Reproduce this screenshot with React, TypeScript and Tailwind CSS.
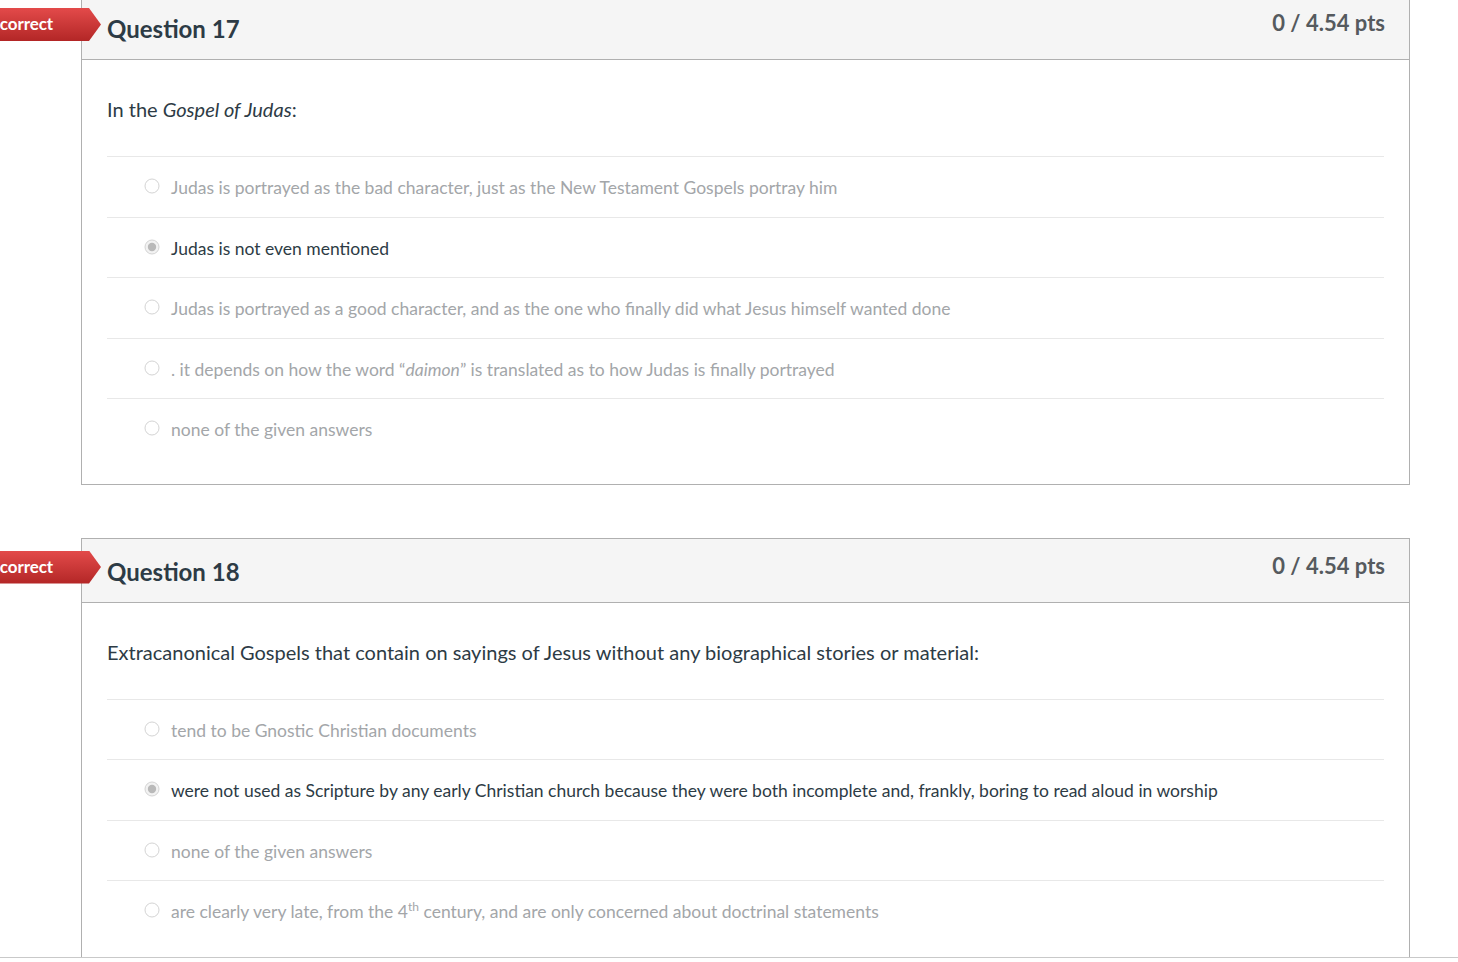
import React from "react";

type Answer = { text: React.ReactNode; selected?: boolean };

const Radio = ({ selected }: { selected?: boolean }) => (
  <svg width="16" height="16" viewBox="0 0 16 16" className="-mt-[1px] shrink-0">
    <circle cx="8" cy="8" r="7" fill={selected ? "#f2f2f2" : "#ffffff"} stroke="#d4d4d4" strokeWidth="1" />
    {selected && <circle cx="8" cy="8" r="4.2" fill="#b9b9b9" />}
  </svg>
);

const Banner = () => (
  <div className="absolute left-[-140px] top-[12px] z-10 h-[33px] w-[159px]">
    <div className="h-full w-full bg-gradient-to-b from-[#e34a4a] to-[#b32626] [clip-path:polygon(0_0,147px_0,159px_50%,147px_100%,0_100%)] flex items-center justify-end pr-[48px]">
      <span className="-mt-[2px] text-white font-bold text-[17px] leading-none tracking-[-0.1px]">Incorrect</span>
    </div>
  </div>
);

const QuestionCard = ({
  num,
  prompt,
  answers,
  className,
}: {
  num: number;
  prompt: React.ReactNode;
  answers: Answer[];
  className?: string;
}) => (
  <div className={`relative ml-[81px] w-[1329px] border border-[#b0b0b0] bg-white ${className ?? ""}`}>
    <Banner />
    <div className="flex h-[64px] items-start justify-between border-b border-[#b0b0b0] bg-[#f5f5f5] pl-[25px] pr-[24px]">
      <h2 className="pt-[18px] text-[24px] font-bold leading-[30px] text-[#2d3b45]">Question {num}</h2>
      <div className="pt-[13px] text-[22px] font-bold leading-[28px] text-[#555a5e]">0 / 4.54 pts</div>
    </div>
    <div className="px-[25px] pt-[35px] pb-[25px]">
      <p className="text-[20px] leading-[28px] text-[#2d3b45]">{prompt}</p>
      <div className="mt-[33px]">
        {answers.map((a, i) => (
          <div key={i} className="flex h-[60.5px] items-center border-t border-[#e8e8e8] pl-[37px]">
            <Radio selected={a.selected} />
            <span
              className={`ml-[11px] pt-[3px] text-[17.5px] leading-[24px] ${a.selected ? "text-[#2d3b45]" : "text-[#a3a6a9]"}`}
            >
              {a.text}
            </span>
          </div>
        ))}
      </div>
    </div>
  </div>
);

export default function App() {
  return (
    <div className="h-[962px] w-[1458px] overflow-hidden bg-white font-['Lato','Liberation_Sans',sans-serif]">
      <div className="h-[958px] overflow-hidden border-b border-[#c9c9c9]">
        <QuestionCard
          num={17}
          className="-mt-[5px]"
          prompt={
            <>
              In the <i>Gospel of Judas</i>:
            </>
          }
          answers={[
            { text: "Judas is portrayed as the bad character, just as the New Testament Gospels portray him" },
            { text: "Judas is not even mentioned", selected: true },
            { text: "Judas is portrayed as a good character, and as the one who finally did what Jesus himself wanted done" },
            {
              text: (
                <>
                  . it depends on how the word “<i>daimon</i>” is translated as to how Judas is finally portrayed
                </>
              ),
            },
            { text: "none of the given answers" },
          ]}
        />
        <QuestionCard
          num={18}
          className="mt-[53px]"
          prompt="Extracanonical Gospels that contain on sayings of Jesus without any biographical stories or material:"
          answers={[
            { text: "tend to be Gnostic Christian documents" },
            {
              text: "were not used as Scripture by any early Christian church because they were both incomplete and, frankly, boring to read aloud in worship",
              selected: true,
            },
            { text: "none of the given answers" },
            {
              text: (
                <>
                  are clearly very late, from the 4<sup className="relative -top-[7px] align-baseline text-[12px]">th</sup> century, and are only concerned about doctrinal statements
                </>
              ),
            },
          ]}
        />
      </div>
    </div>
  );
}
